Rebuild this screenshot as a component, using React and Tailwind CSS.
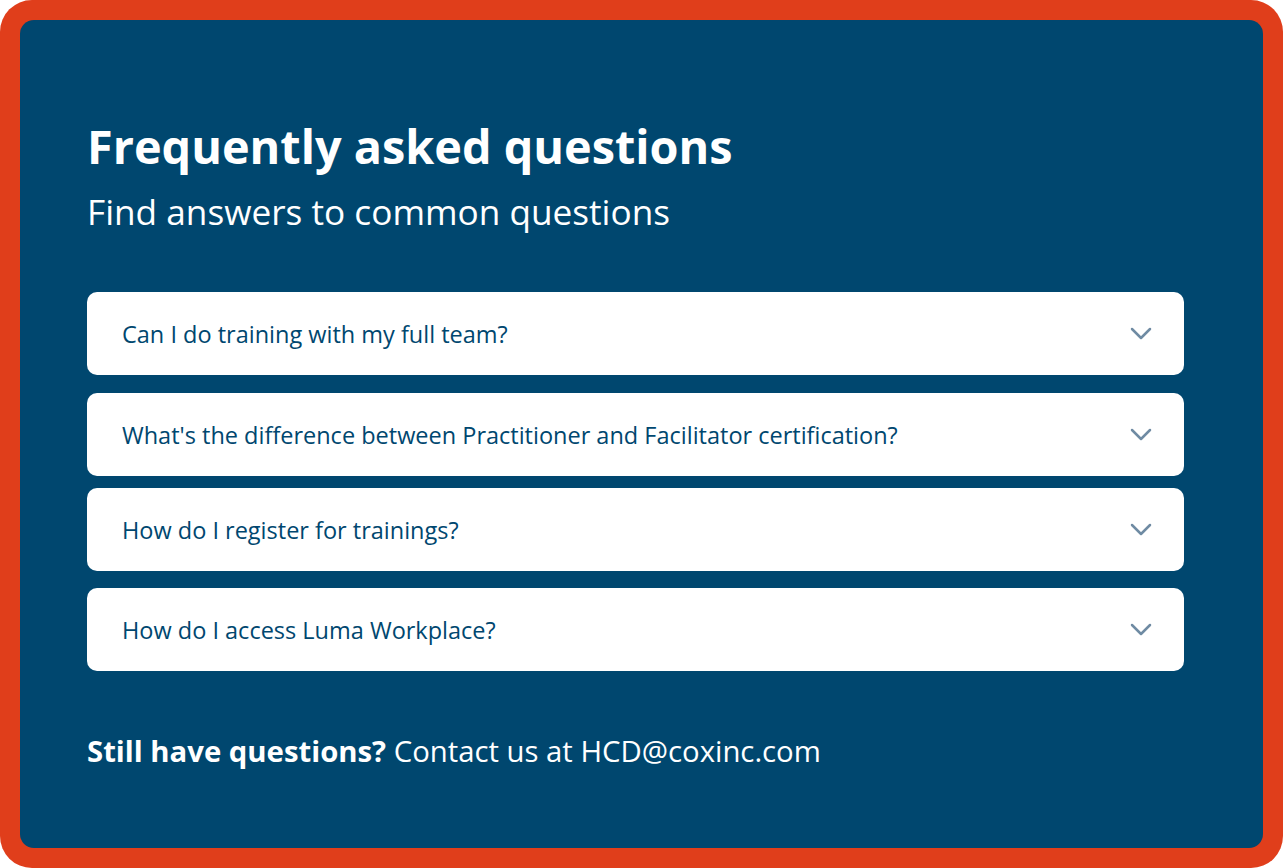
import React from "react";

const questions = [
  { q: "Can I do training with my full team?", mt: "mt-0" },
  { q: "What's the difference between Practitioner and Facilitator certification?", mt: "mt-[18px]" },
  { q: "How do I register for trainings?", mt: "mt-[12px]" },
  { q: "How do I access Luma Workplace?", mt: "mt-[17px]" },
];

const Chevron = () => (
  <svg width="22" height="13" viewBox="0 0 22 13" fill="none" stroke="#6f8ba3" strokeWidth="2.5" strokeLinecap="round" strokeLinejoin="round">
    <path d="M2 2l9 9 9-9" />
  </svg>
);

export default function App() {
  return (
    <div className="w-[1283px] h-[868px] bg-white" style={{ fontFamily: '"Open Sans", "Noto Sans", sans-serif' }}>
      <div className="w-full h-full rounded-[32px] bg-[#e03e1b] p-[20px]">
        <div className="w-full h-full rounded-[14px] bg-[#00476f] pl-[67px] pr-[79px] pt-[98px]">
          <h1 className="text-[46.8px] leading-[56px] font-bold text-white">
            Frequently asked questions
          </h1>
          <p className="mt-[13px] text-[35.2px] leading-[48px] text-white">
            Find answers to common questions
          </p>

          <div className="mt-[57px] flex flex-col">
            {questions.map((item) => (
              <div
                key={item.q}
                className={`${item.mt} h-[83px] rounded-[10px] bg-white flex items-center justify-between pl-[35px] pr-[32px]`}
              >
                <span className="pt-[3px] text-[23.5px] text-[#00476f]">{item.q}</span>
                <Chevron />
              </div>
            ))}
          </div>

          <p className="mt-[60px] text-[29.3px] leading-[40px] text-white">
            <span className="font-bold">Still have questions?</span> Contact us at HCD@coxinc.com
          </p>
        </div>
      </div>
    </div>
  );
}
